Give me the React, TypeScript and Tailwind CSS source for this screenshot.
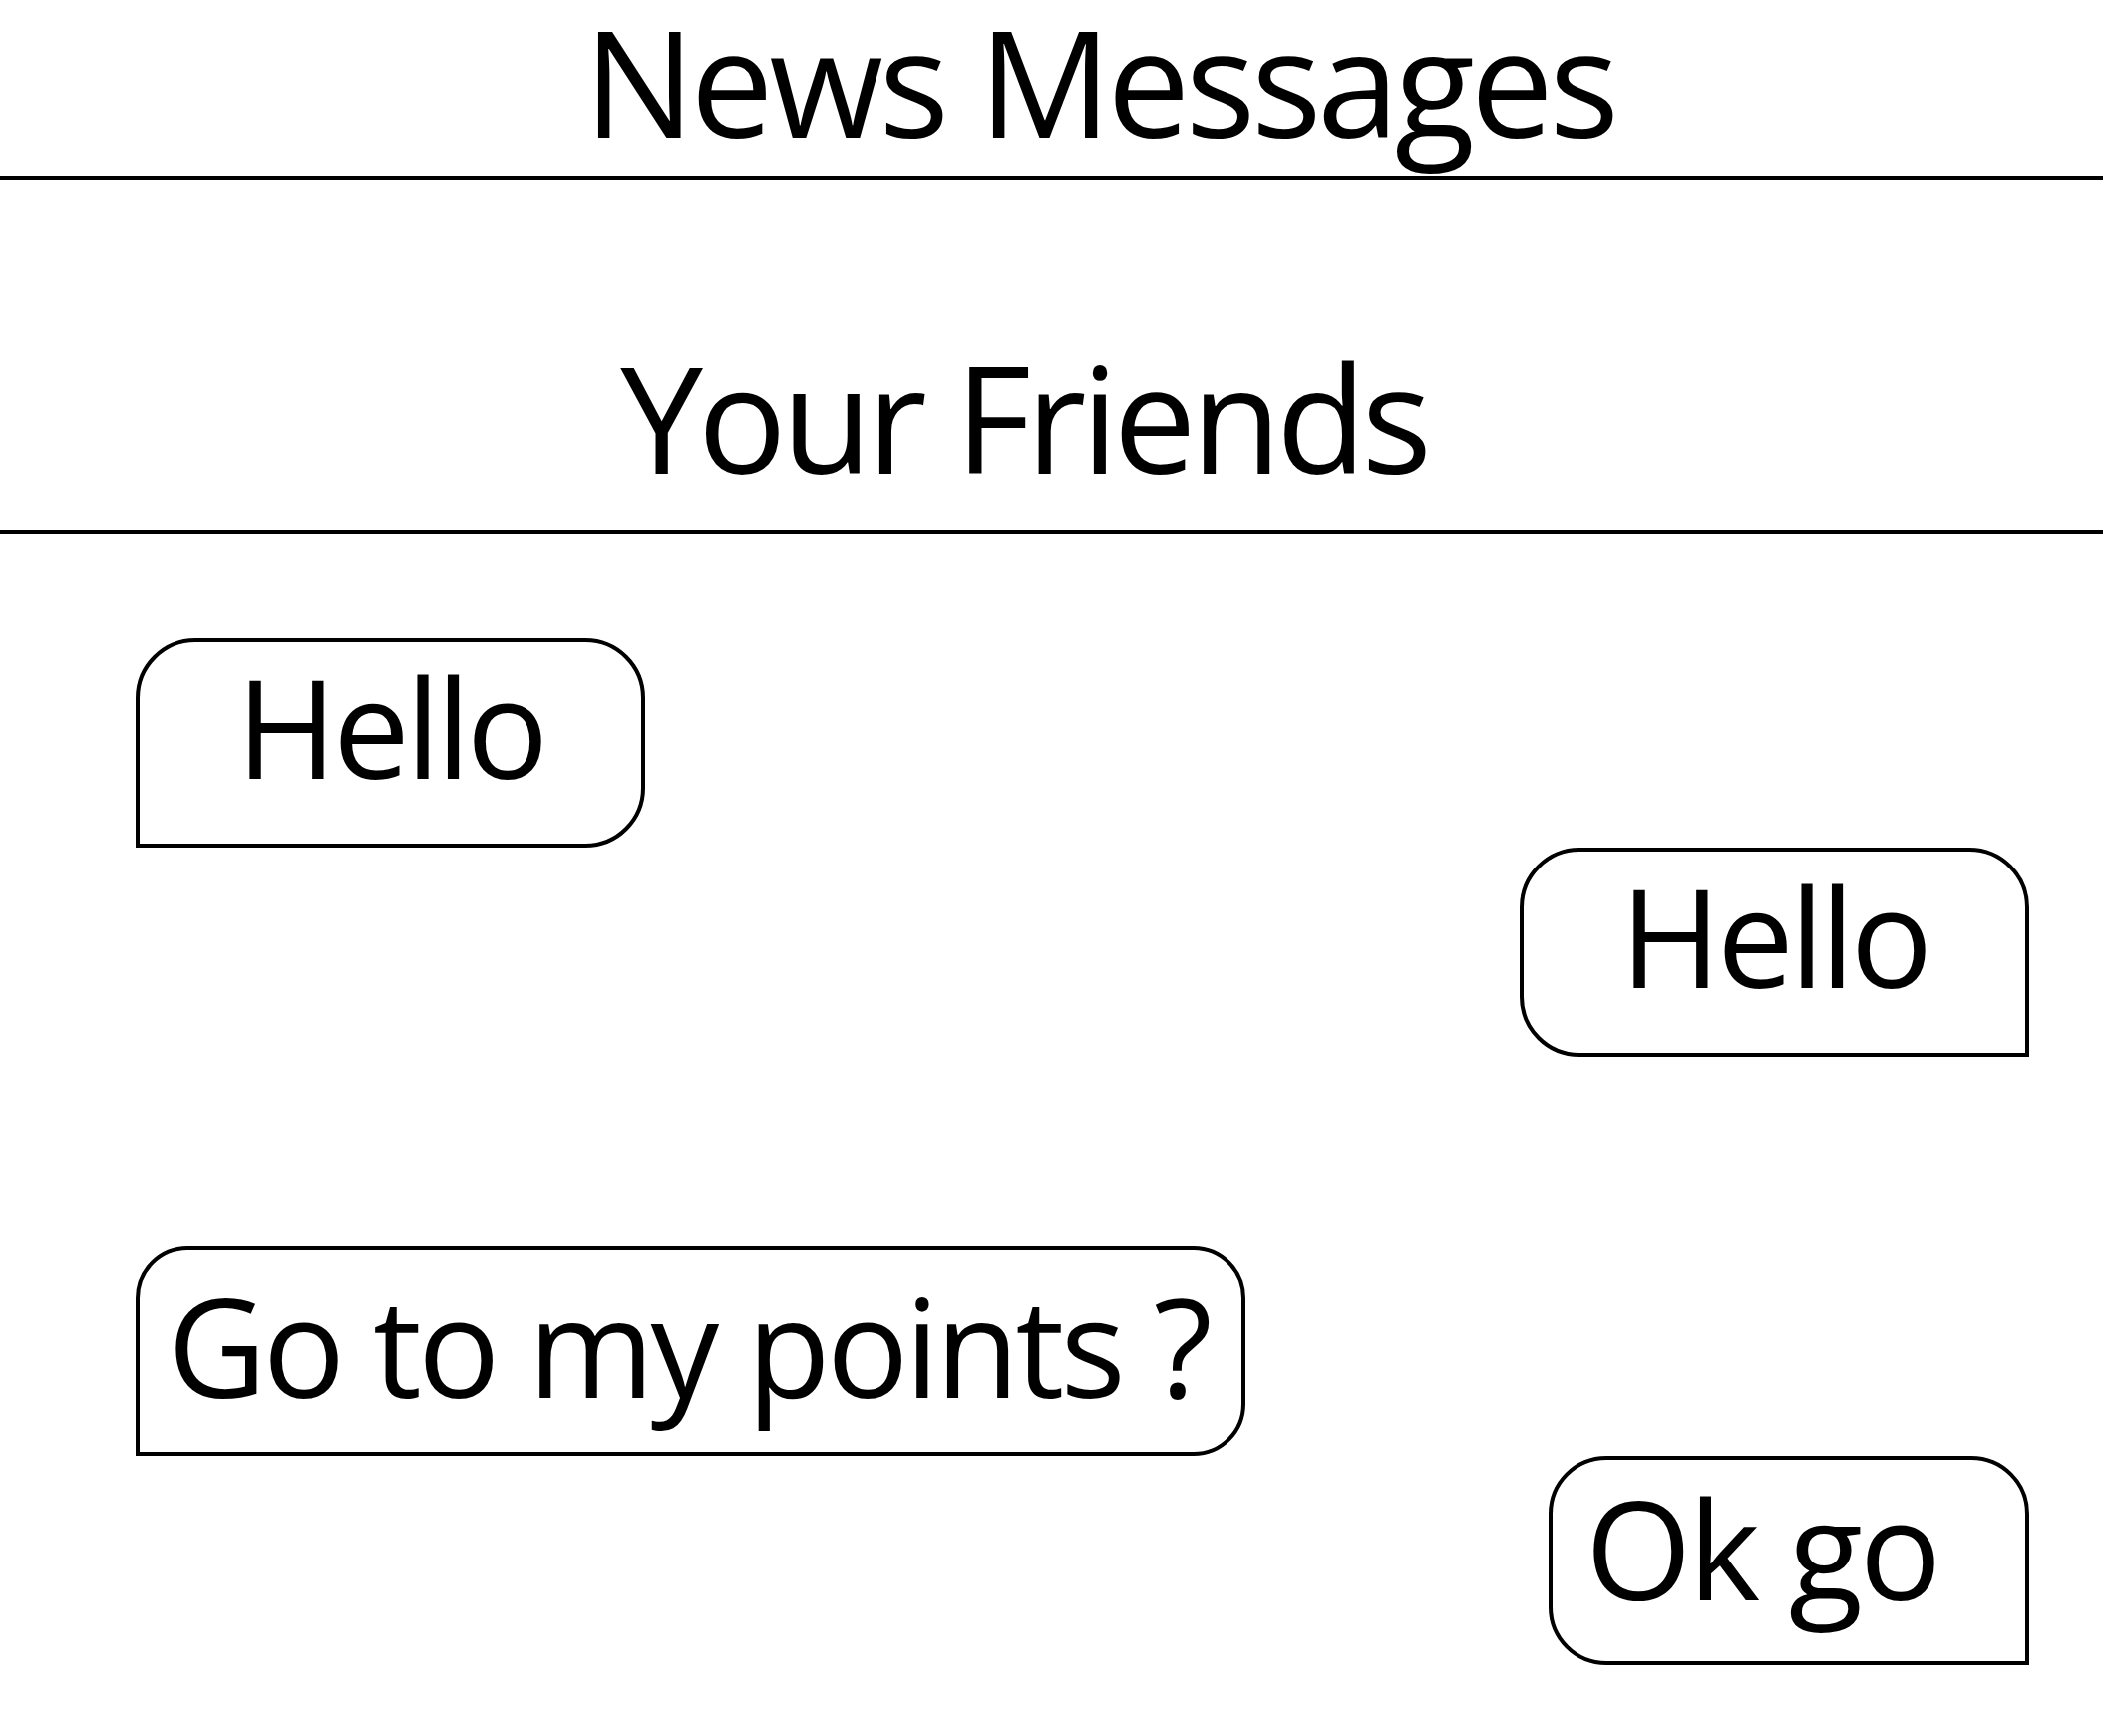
const font = { fontFamily: '"Open Sans", "Noto Sans", sans-serif' }

type Bubble = {
  text: string
  side: 'left' | 'right'
  width: string
  corner: string
  inner: string
  track: string
}

const bubbles: Bubble[] = [
  { text: 'Hello', side: 'left', width: 'w-[511px]', corner: 'rounded-[60px] rounded-bl-none', inner: 'justify-center pt-[15px]', track: 'tracking-[-0.03em]' },
  { text: 'Hello', side: 'right', width: 'w-[511px]', corner: 'rounded-[60px] rounded-br-none', inner: 'justify-center pt-[15px]', track: 'tracking-[-0.03em]' },
  { text: 'Go to my points ?', side: 'left', width: 'w-[1113px]', corner: 'rounded-[52px] rounded-bl-none', inner: 'justify-start pl-[28px] pt-[26px]', track: 'tracking-[-0.028em]' },
  { text: 'Ok go', side: 'right', width: 'w-[482px]', corner: 'rounded-[58px] rounded-br-none', inner: 'justify-start pl-[33px] pt-[19px]', track: 'tracking-[-0.025em]' },
]

function ChatBubble({ b }: { b: Bubble }) {
  return (
    <div className={`flex ${b.side === 'left' ? 'justify-start pl-[136px]' : 'justify-end pr-[74px]'}`}>
      <div className={`${b.width} ${b.corner} h-[210px] border-4 border-black flex items-start ${b.inner}`}>
        <span className={`text-[137px] leading-[1.3] -mt-[20px] ${b.track} text-black whitespace-nowrap`}>{b.text}</span>
      </div>
    </div>
  )
}

export default function App() {
  return (
    <div className="w-[2109px] h-[1741px] bg-white text-black overflow-hidden" style={font}>
      <div className="h-[181px] border-b-4 border-black flex justify-center pl-[96px]">
        <h1 className="text-[148px] leading-[1.1] tracking-[-0.03em] font-normal">News Messages</h1>
      </div>
      <div className="h-[355px] border-b-4 border-black pt-[152px] flex justify-center pr-[56px]">
        <h2 className="text-[148px] leading-[1.15] tracking-[-0.035em] font-normal">Your Friends</h2>
      </div>
      <div className="pt-[104px]">
        <ChatBubble b={bubbles[0]} />
        <ChatBubble b={bubbles[1]} />
        <div className="h-[190px]" />
        <ChatBubble b={bubbles[2]} />
        <ChatBubble b={bubbles[3]} />
      </div>
    </div>
  )
}
